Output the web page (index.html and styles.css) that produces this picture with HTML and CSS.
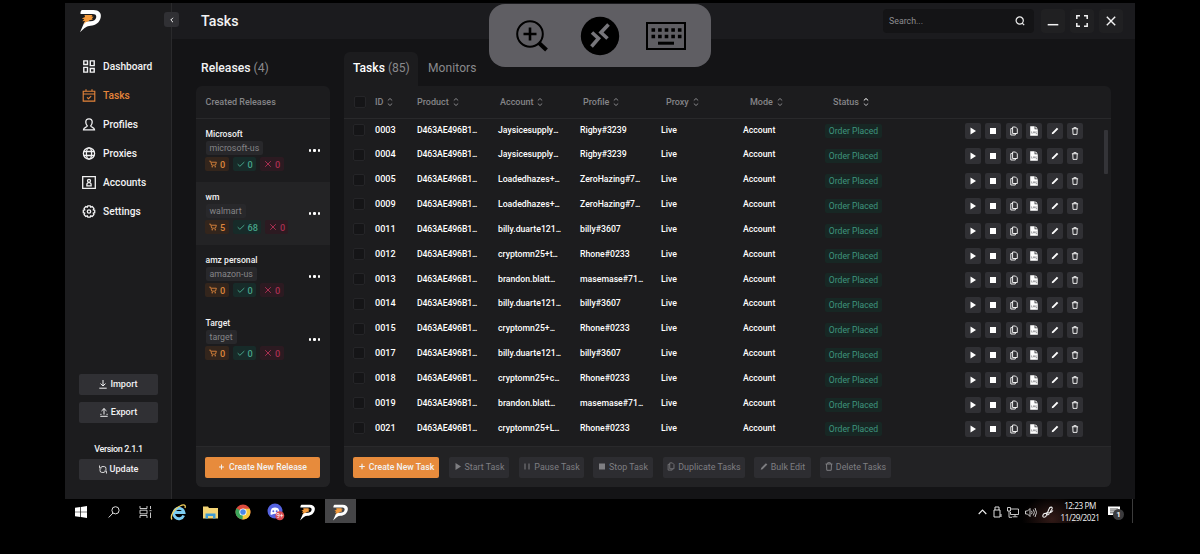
FILE: index.html
```html
<!DOCTYPE html>
<html lang="en">
<head>
<meta charset="utf-8">
<title>Tasks</title>
<link rel="stylesheet" href="styles.css">
</head>
<body>
<svg class="sprite" aria-hidden="true">
  <symbol id="logo" viewBox="0 0 22 24"><path d="M1 5C.8 2.500 1.800 1 2.600 1H14c5.500 0 8.200 3.200 7.200 7.500-1 4.800-4.800 8-10.200 8.200-3.800.1-6 2.300-10.500 6.500L4.300 14.500c.5-1.500 1.700-2.200 3.200-2.200h3.500c3.300 0 5.200-1.300 5.700-3.700C17.200 6.100 15.800 5 12.800 5z" fill="#fff"/><path d="M5 6h8l-1 1.500 2.200.3-1.700 1.500.8 1.200-3.300.8-1.500 1.200-2 .5-2.500 2.300L5.500 12l-2.700.2 2-2-2.500-.8L5.500 8z" fill="#f39a3c"/></symbol>
  <symbol id="grid" viewBox="0 0 12 12"><path d="M1.200.800h3.400v3.400H1.200zM7.200.800h3.600v4.400H7.200zM1.200 6.800h3.400v4.400H1.200zM7.200 7.800h3.600v3.400H7.200z" fill="none" stroke="currentColor" stroke-width="1.300"/></symbol>
  <symbol id="calendar" viewBox="0 0 13 13"><path d="M.7 2.200h11.600v9.900H.7zM.7 5h11.600M3.500.300v2.500M9.500.300v2.500M4.500 8.300l1.500 1.400 2.700-2.600" fill="none" stroke="currentColor" stroke-width="1.100"/></symbol>
  <symbol id="person" viewBox="0 0 13 13"><path d="M4.800 8C3.500 6.700 3.300 5.200 3.300 4c0-2 1.300-3.200 3.200-3.200S9.700 2 9.700 4c0 1.200-.2 2.700-1.500 4 .2 1.300 3.800.900 3.800 3.800H1C1 8.900 4.600 9.300 4.800 8z" fill="none" stroke="currentColor" stroke-width="1.300"/></symbol>
  <symbol id="globe" viewBox="0 0 13 13"><g fill="none" stroke="currentColor" stroke-width="1.300"><circle cx="6.500" cy="6.500" r="5.600"/><ellipse cx="6.500" cy="6.500" rx="2.600" ry="5.600"/><path d="M1.300 4.500h10.400M1.300 8.500h10.400"/></g></symbol>
  <symbol id="account" viewBox="0 0 14 13"><g fill="none" stroke="currentColor" stroke-width="1.300"><path d="M.7.700h12.600v11.600H.7z"/><circle cx="7" cy="4.800" r="1.500"/><path d="M4.900 9.800V8.500c0-2.600 4.200-2.600 4.200 0v1.300z"/></g></symbol>
  <symbol id="gear" viewBox="0 0 13 13"><g fill="none" stroke="currentColor" stroke-width="1.300"><path d="M5.300.800h2.400l.5 1.400 1.500-.6 1.700 1.700-.6 1.500 1.400.5v2.400l-1.400.5.600 1.500-1.700 1.700-1.500-.6-.5 1.400H5.300l-.5-1.400-1.500.6-1.700-1.700.6-1.500-1.400-.5V5.300l1.400-.5-.6-1.500 1.700-1.700 1.500.6z"/><circle cx="6.500" cy="6.500" r="1.700"/></g></symbol>
  <symbol id="import" viewBox="0 0 8 9"><path d="M4 0v6M1.500 3.600L4 6l2.500-2.400M.3 8.200h7.400" fill="none" stroke="currentColor"/></symbol>
  <symbol id="export" viewBox="0 0 8 9"><path d="M4 6.500v-6M1.500 3L4 .600 6.500 3M1.500 6.300H.3M6.500 6.300h1.200M.3 8.300h7.400" fill="none" stroke="currentColor"/></symbol>
  <symbol id="refresh" viewBox="0 0 9 9"><path d="M2.800 1.200h3a2 2 0 0 1 2 2v2.600M.6 0v2.600h2.600M6.200 7.800h-3a2 2 0 0 1-2-2V3.200M8.400 9V6.400H5.800" fill="none" stroke="currentColor"/></symbol>
  <symbol id="cart" viewBox="0 0 9 8"><path d="M.3.800h1.500l1.300 4.500h4.200l1-3.300H2.500" fill="none" stroke="currentColor"/><circle cx="3.600" cy="7" r=".8" fill="currentColor"/><circle cx="7" cy="7" r=".8" fill="currentColor"/></symbol>
  <symbol id="check" viewBox="0 0 8 8"><path d="M.7 4.200l2.200 2.100 4.400-4.200" fill="none" stroke="currentColor"/></symbol>
  <symbol id="cross" viewBox="0 0 8 8"><path d="M1.200 1.200l5.600 5.600M6.800 1.200L1.200 6.800" fill="none" stroke="currentColor"/></symbol>
  <symbol id="plus" viewBox="0 0 8 8"><path d="M4 1.200v5.600M1.200 4h5.600" fill="none" stroke="currentColor" stroke-width="1.200"/></symbol>
  <symbol id="sort" viewBox="0 0 6 10"><path d="M.8 3.500L3 1.500l2.200 2" fill="none" stroke="var(--up, currentColor)"/><path d="M.8 6.500L3 8.500l2.200-2" fill="none" stroke="currentColor"/></symbol>
  <symbol id="play" viewBox="0 0 8 8"><path d="M1.500.500l5.500 3.500-5.500 3.500z" fill="currentColor"/></symbol>
  <symbol id="pause" viewBox="0 0 8 8"><path d="M2 1v6M6 1v6" stroke="currentColor"/></symbol>
  <symbol id="stop" viewBox="0 0 8 8"><path d="M1 1h6v6H1z" fill="currentColor"/></symbol>
  <symbol id="copy" viewBox="0 0 8 10"><path d="M2.600 1h2.900l1.800 1.800v4.700H2.600zM2.600 2.600H.8V9h4.500V7.500" fill="none" stroke="currentColor" stroke-width=".9"/></symbol>
  <symbol id="log" viewBox="0 0 8 10"><path d="M.2.300h4.400v3h3.200v6.400H.2zM5.400.300l2.400 2.300H5.400z" fill="currentColor"/><path d="M1.600 5.300v1.900h1.100M3.500 5.700h1V7h-1zM6.600 5.700h-.9V7h.9v.9h-.9" fill="none" stroke="#66666a" stroke-width=".5"/></symbol>
  <symbol id="pencil" viewBox="0 0 8 8"><path d="M.7 7.300l.5-1.900L5.900.700l1.400 1.400-4.700 4.700z" fill="currentColor"/></symbol>
  <symbol id="trash" viewBox="0 0 8 9"><path d="M.5 2h7M2.700 2V.700h2.600V2M1.500 2l.3 6.300h4.400L6.500 2" fill="none" stroke="currentColor"/></symbol>
</svg>

<div class="app">
  <aside class="sidebar">
    <svg class="brand"><use href="#logo"/></svg>
    <button class="collapse"><svg viewBox="0 0 6 6"><path d="M4 .800L1.800 3 4 5.200" fill="none" stroke="currentColor"/></svg></button>
    <nav class="nav">
      <a><svg><use href="#grid"/></svg>Dashboard</a>
      <a class="active"><svg><use href="#calendar"/></svg>Tasks</a>
      <a><svg><use href="#person"/></svg>Profiles</a>
      <a><svg><use href="#globe"/></svg>Proxies</a>
      <a><svg><use href="#account"/></svg>Accounts</a>
      <a><svg><use href="#gear"/></svg>Settings</a>
    </nav>
    <div class="side-actions">
      <button class="side-btn"><svg><use href="#import"/></svg>Import</button>
      <button class="side-btn"><svg><use href="#export"/></svg>Export</button>
      <span class="version">Version 2.1.1</span>
      <button class="side-btn"><svg><use href="#refresh"/></svg>Update</button>
    </div>
  </aside>

  <main class="main">
    <header class="topbar">
      <h1>Tasks</h1>
      <div class="search"><span>Search...</span><svg viewBox="0 0 10 10"><g fill="none" stroke="currentColor" stroke-width="1.200"><circle cx="4.700" cy="4.500" r="3.600"/><path d="M7.200 7.100l2 2"/></g></svg></div>
      <div class="window-btns">
        <button><svg viewBox="0 0 12 12"><path d="M.7 9.700h10.600" stroke="currentColor" stroke-width="1.500"/></svg></button>
        <button><svg viewBox="0 0 12 12"><path d="M.8 4V.800H4M8 .800h3.200V4M11.200 8v3.200H8M4 11.200H.8V8" fill="none" stroke="currentColor" stroke-width="1.500"/></svg></button>
        <button><svg viewBox="0 0 12 12"><path d="M1.800 1.800l8.400 8.400M10.200 1.800l-8.400 8.400" stroke="currentColor" stroke-width="1.400"/></svg></button>
      </div>
    </header>

    <div class="content">
      <section class="releases">
        <h2>Releases <span>(4)</span></h2>
        <div class="panel">
          <div class="panel-head">Created Releases</div>
          <div class="release-list" id="releases"></div>
          <div class="panel-foot"><button class="primary"><svg><use href="#plus"/></svg>Create New Release</button></div>
        </div>
      </section>

      <section class="tasks">
        <div class="tabs">
          <div class="tab selected">Tasks <span>(85)</span></div>
          <div class="tab">Monitors</div>
        </div>
        <div class="panel flat">
          <div class="table-head">
            <i class="box"></i>
            <span>ID<svg><use href="#sort"/></svg></span>
            <span>Product<svg><use href="#sort"/></svg></span>
            <span>Account<svg><use href="#sort"/></svg></span>
            <span>Profile<svg><use href="#sort"/></svg></span>
            <span>Proxy<svg><use href="#sort"/></svg></span>
            <span>Mode<svg><use href="#sort"/></svg></span>
            <span class="sorted">Status<svg><use href="#sort"/></svg></span>
          </div>
          <div class="table-body">
            <div class="rows" id="rows"></div>
            <div class="scroll"><div class="thumb"></div></div>
          </div>
          <div class="panel-foot toolbar">
            <button class="primary"><svg><use href="#plus"/></svg>Create New Task</button>
            <button class="w-start"><svg><use href="#play"/></svg>Start Task</button>
            <button class="w-pause"><svg><use href="#pause"/></svg>Pause Task</button>
            <button class="w-stop"><svg><use href="#stop"/></svg>Stop Task</button>
            <button class="w-dup"><svg><use href="#copy"/></svg>Duplicate Tasks</button>
            <button class="w-edit"><svg><use href="#pencil"/></svg>Bulk Edit</button>
            <button class="w-del"><svg><use href="#trash"/></svg>Delete Tasks</button>
          </div>
        </div>
      </section>
    </div>
  </main>
</div>

<div class="remote-bar">
  <svg class="r-zoom" viewBox="0 0 32 32"><g fill="none" stroke="#000"><circle cx="14" cy="14" r="12.800" stroke-width="2"/><path d="M14 7.500v13M7.500 14h13" stroke-width="2.600"/><path d="M23 23l7.500 7" stroke-width="4"/></g></svg>
  <svg class="r-rdp" viewBox="0 0 40 40"><circle cx="20" cy="20" r="19.200" fill="#000"/><g fill="none" stroke="#77767b" stroke-width="3.600"><path d="M12 16.500l6.500 6-7 8"/><path d="M28.500 8.500L21 16.500l6.500 6"/></g></svg>
  <svg class="r-keys" viewBox="0 0 40 28"><path d="M1 1h38v26H1z" fill="none" stroke="#000" stroke-width="2"/><path d="M5.500 8h30M5.500 14.500h30" stroke="#000" stroke-width="3.600" stroke-dasharray="3.600 3"/><path d="M12 21.200h16" stroke="#000" stroke-width="3"/></svg>
</div>

<footer class="taskbar">
  <div class="task-icons">
    <span><svg width="12" height="12" viewBox="0 0 12 12"><path d="M0 1.700L5.300 1v4.700H0zM6 .900L12 0v5.700H6zM0 6.300h5.300V11L0 10.300zM6 6.300h6V12l-6-.9z" fill="#fff"/></svg></span>
    <span><svg width="12" height="12" viewBox="0 0 12 12"><g fill="none" stroke="#ddd"><circle cx="7.500" cy="4.300" r="3.600"/><path d="M5 7L.700 11.500"/></g></svg></span>
    <span><svg width="13" height="12" viewBox="0 0 13 12"><path d="M1 0v2.500h7V0M1 12V9.500h7V12M1 4.200h7v3.600H1zM11.500 0v3M11.500 6.500V12M10.500 4.700h2" fill="none" stroke="#ddd" stroke-width=".9"/></svg></span>
    <span><svg width="17" height="17" viewBox="0 0 17 17"><path d="M13.700 11.500A5.200 5.200 0 1 1 14 8.500H5" fill="none" stroke="#7ccdf2" stroke-width="2.800"/><path d="M2 15.500C-.5 12 5 4 10 2c4-2 6-1 5 2" fill="none" stroke="#f0cd5a" stroke-width="1.300"/></svg></span>
    <span><svg width="15" height="13" viewBox="0 0 15 13"><path d="M0 .500h5l1 1.500h9v10.500H0z" fill="#f3d475"/><path d="M2.500 7.500h10v5h-2.500V10H5v2.500H2.500z" fill="#3f9bd4"/></svg></span>
    <span><svg width="16" height="16" viewBox="0 0 16 16"><circle cx="8" cy="8" r="7.500" fill="#dc4b3e"/><path d="M8 8L1.500 4.200A7.500 7.500 0 0 0 7.500 15.500L11 10z" fill="#3ba55a"/><path d="M8 8V4.800h6.700A7.500 7.500 0 0 1 7.500 15.500z" fill="#f5c93b"/><circle cx="8" cy="8" r="3.600" fill="#fff"/><circle cx="8" cy="8" r="2.800" fill="#4a87e8"/></svg></span>
    <span><svg width="18" height="18" viewBox="0 0 18 18"><circle cx="8" cy="8" r="7.500" fill="#5563e0"/><path d="M3.500 11.500c0-3 .5-5 1.500-6.300 2-.9 4-.9 6 0 1 1.300 1.500 3.300 1.500 6.300-2 .7-2-.7-4.500-.7s-2.500 1.400-4.500.7z" fill="#fff"/><circle cx="6.300" cy="8.200" r="1" fill="#5563e0"/><circle cx="9.700" cy="8.200" r="1" fill="#5563e0"/><circle cx="12.800" cy="12.800" r="4.500" fill="#d84a50"/><text x="12.800" y="15.200" text-anchor="middle" font-size="6.500" fill="#fff">9+</text></svg></span>
    <span><svg width="17" height="17"><use href="#logo"/></svg></span>
    <span class="open"><svg width="17" height="17"><use href="#logo"/></svg></span>
  </div>
  <div class="tray">
    <svg width="9" height="6" viewBox="0 0 9 6"><path d="M.7 5l3.800-4 3.800 4" fill="none" stroke="#eee" stroke-width="1.100"/></svg>
    <svg width="9" height="12" viewBox="0 0 9 12"><path d="M2 4V1h4v3M1 4h6v7H1zM8 8v3" fill="none" stroke="#ddd"/></svg>
    <svg width="12" height="11" viewBox="0 0 12 11"><path d="M4 2h7.500v5.500h-8V5M.5.500h3V4h-3zM2 4v6.300h3M8 7.500v2M5.500 9.800h5" fill="none" stroke="#ddd" stroke-width=".9"/></svg>
    <svg width="12" height="11" viewBox="0 0 12 11"><path d="M.5 4h2l2.500-2.500v8L2.500 7h-2zM6.500 3.800q1.200 1.700 0 3.400M8.300 2.500q2.200 3 0 6M10 1q3 4.500 0 9" fill="none" stroke="#ddd" stroke-width=".9"/></svg>
    <svg width="12" height="12" viewBox="0 0 12 12"><path d="M1 9c-1 3 3 3 3.500 0L7 3c1-3 4-2 3 0L7 8C5.500 10 3.500 8 5 6.500M1 9c.5-2 3-2 5-2s4-1 5-2.500" fill="none" stroke="#eee" stroke-width="1.100"/></svg>
    <div class="clock"><span>12:23 PM</span><span>11/29/2021</span></div>
    <div class="notice"><svg width="12" height="12" viewBox="0 0 12 12"><path d="M0 .500h12v8.500H8L6 11.500 6 9H0z" fill="#fff"/><path d="M2 3h8M2 4.900h8M2 6.800h6" stroke="#111" stroke-width=".7"/></svg><b>1</b></div>
  </div>
</footer>
<script src="app.js"></script>
</body>
</html>
```

FILE: styles.css
```css
* { box-sizing: border-box; }
body {
  margin: 0; width: 1200px; height: 554px; overflow: hidden;
  padding: 3px 65px 0; background: #000; color: #f2f2f3;
  font-family: Roboto, "Liberation Sans", sans-serif; font-size: 9px;
}
h1, h2 { margin: 0; font-weight: 500; }
button {
  border: 0; padding: 0; margin: 0; font: inherit; color: inherit;
  display: flex; align-items: center; justify-content: center;
}
svg { flex: none; display: block; }
.sprite { position: absolute; width: 0; height: 0; }

.app { display: flex; height: 496px; background: #141416; }

.sidebar {
  position: relative; width: 107px; display: flex; flex-direction: column;
  background: #1c1c1e; border-right: 1px solid #2a2a2c;
}
.brand { width: 23px; height: 24px; margin: 6px 0 0 14px; }
.collapse {
  position: absolute; left: 99px; top: 9px; width: 15px; height: 15px;
  background: #303034; border-radius: 3px; z-index: 1;
}
.collapse svg { width: 6px; height: 6px; }
.nav { margin: 18.500px 0 0 17px; display: flex; flex-direction: column; }
.nav a {
  height: 29px; display: flex; align-items: center; gap: 7px;
  font-size: 10.200px; font-weight: 500;
}
.nav svg { width: 14px; height: 13px; }
.nav .active { color: #e5843a; }
.side-actions {
  margin: auto 13px 19.500px 14px; display: flex; flex-direction: column; gap: 7px;
}
.side-btn {
  height: 21px; gap: 3px; background: #303034; border-radius: 2px;
  font-size: 9.100px; font-weight: 500;
}
.side-btn svg { width: 8px; height: 9px; }
.version { margin: 13px 0 -3px; line-height: 12px; text-align: center; font-size: 9px; font-weight: 500; letter-spacing: -.35px; }

.main { flex: 1; display: flex; flex-direction: column; }
.topbar {
  height: 36px; display: flex; align-items: center; padding: 0 12px 0 29px;
  background: #1b1b1e;
}
.topbar h1 { font-size: 14.200px; letter-spacing: .05px; }
.search {
  margin-left: auto; width: 151px; height: 24px; border-radius: 4px;
  padding: 0 9px 0 6px; display: flex; align-items: center; justify-content: space-between;
  background: #141416; color: #8c8c8f; font-size: 8.800px;
}
.search svg { width: 10px; height: 10px; color: #eee; }
.window-btns { display: flex; gap: 5px; margin-left: 7px; }
.window-btns button { width: 24px; height: 24px; border-radius: 4px; background: #202022; }
.window-btns svg { width: 12px; height: 12px; }

.content { flex: 1; display: flex; gap: 14px; padding: 13px 24px 12px 24px; }
.releases { width: 134px; display: flex; flex-direction: column; }
.releases h2 { height: 34px; line-height: 32px; padding-left: 5px; font-size: 12.200px; }
h2 span, .tab span { color: #8a8a8d; font-weight: 400; }
.panel {
  flex: 1; display: flex; flex-direction: column; overflow: hidden;
  background: #1c1c1e; border-radius: 6px;
}
.panel.flat { border-top-left-radius: 0; }
.panel-head {
  height: 33px; line-height: 32px; padding-left: 9.500px; color: #858588;
  font-weight: 500; border-bottom: 1px solid #29292b;
}
.release-list { flex: 1; }
.release {
  height: 63px; padding: 9px 11px 0 9.500px; display: flex; justify-content: space-between;
}
.release.current { background: #232325; }
.release-info { display: flex; flex-direction: column; align-items: flex-start; }
.release-name { line-height: 13px; font-size: 8.600px; font-weight: 500; }
.store {
  height: 14px; line-height: 14px; padding: 0 4px; border-radius: 2px;
  background: #28282b; color: #858588; font-size: 8.800px;
}
.badges { display: flex; gap: 4px; margin-top: 2px; margin-left: -.5px; }
.badge {
  height: 14px; min-width: 23.500px; padding: 0 3px 0 4px; border-radius: 2px;
  display: flex; align-items: center; gap: 3px; font-size: 9.200px; font-weight: 500;
}
.badge svg { width: 8px; height: 8px; }
.cart { background: #33251c; color: #df873d; }
.ok { background: #172b29; color: #46a389; }
.bad { background: #2c1a21; color: #a82f50; }
.dots { display: flex; gap: 2px; margin-top: 21px; margin-right: -1px; }
.dots i { width: 2.500px; height: 2.500px; border-radius: 1px; background: #fff; }
.panel-foot {
  height: 41px; padding: 0 9px; display: flex; align-items: center;
  background: #222224; border-top: 1px solid #29292b;
}
.primary { background: #e78b3c; border-radius: 2px; height: 21px; font-weight: 500; gap: 4px; }
.primary svg { width: 7px; height: 8px; }
.panel-foot button { padding-bottom: 1px; }
.releases .primary { width: 115px; font-size: 8.700px; }

.tasks { flex: 1; display: flex; flex-direction: column; }
.tabs { height: 34px; display: flex; }
.tab { padding-left: 10px; line-height: 32px; font-size: 12px; color: #8a8a8d; letter-spacing: .1px; }
.tab.selected {
  width: 74px; padding-left: 9px; background: #1c1c1e; color: #fff; font-weight: 500;
  border-radius: 6px 6px 0 0; font-size: 12.100px; letter-spacing: 0;
}
.table-head {
  height: 33px; padding-left: 10px; border-bottom: 1px solid #29292b;
  display: grid; grid-template-columns: 21px 42px 83px 83px 83px 84px 83px 1fr;
  align-items: center; color: #858588; font-size: 9px; font-weight: 500;
}
.table-head span { display: flex; align-items: center; gap: 4px; }
.table-head svg { width: 6px; height: 10px; }
.sorted { --up: #fff; }
.sorted svg { color: #b5b5b8; }
.box { width: 12px; height: 12px; background: #151517; border: 1px solid #252528; border-radius: 2px; }
.table-body { flex: 1; display: flex; justify-content: space-between; }
.row {
  height: 24.830px; padding-left: 9px; display: grid; align-items: center;
  grid-template-columns: 22px 42px 81px 82px 81px 82px 82px 140px auto;
  font-size: 8.700px; font-weight: 500; color: #fff;
}
.row > span { padding-bottom: 3.500px; }
.row .id { font-size: 9.100px; }
.row .product { letter-spacing: -.12px; }
.row .more { letter-spacing: -.9px; }
.row .box { margin-bottom: 3px; }
.row > .status {
  width: 57px; height: 14px; padding: 0; line-height: 14px; text-align: center;
  background: #172724; color: #3f957e; font-weight: 400; border-radius: 2px; font-size: 8.600px;
}
.actions { display: flex; gap: 4.400px; }
.actions button { width: 16px; height: 16px; background: #303034; border-radius: 2px; }
.actions svg { width: 8px; height: 8px; }
.actions .tall svg { height: 10px; width: 8px; }
.scroll { width: 4px; margin-right: 3px; padding-top: 11px; }
.thumb { height: 44px; background: #343438; border-radius: 1px; }
.toolbar button { height: 21px; border-radius: 2px; }
.toolbar button:not(.primary) { background: #2d2d31; color: #7e7e82; gap: 3px; font-size: 8.900px; }
.toolbar svg { width: 8px; height: 9px; }
.toolbar .primary { width: 86px; gap: 3px; margin-right: 10px; font-size: 8.700px; }
.toolbar .w-start { width: 60px; margin-right: 10px; }
.toolbar .w-pause { width: 65px; margin-right: 9px; }
.toolbar .w-stop { width: 60px; margin-right: 10px; }
.toolbar .w-dup { width: 82px; margin-right: 9px; }
.toolbar .w-edit { width: 57px; margin-right: 9px; }
.toolbar .w-del { width: 71px; }

.remote-bar {
  position: absolute; left: 489px; top: 4px; width: 222px; height: 63px;
  border-radius: 16px; background: #5f5e63;
  display: flex; align-items: center; padding-left: 27px;
}
.r-zoom { width: 32px; height: 32px; }
.r-rdp { width: 40px; height: 40px; margin-left: 32px; }
.r-keys { width: 40px; height: 28px; margin-left: 26px; }

.taskbar {
  height: 24px; display: flex; justify-content: space-between;
  background: radial-gradient(ellipse 30px 24px at 987px 20px, #321a17, transparent);
}
.task-icons { display: flex; }
.task-icons span { width: 32.400px; height: 24px; display: flex; align-items: center; justify-content: center; padding-top: 2px; }
.task-icons span.open { width: 31px; margin-left: 1px; background: #454547; }
.tray { display: flex; align-items: center; padding: 2px 10px 0 0; margin-right: 2px; border-right: 1px solid #3c3c3c; gap: 6px; }
.tray > svg { margin-left: -.5px; }
.clock {
  width: 40px; display: flex; flex-direction: column; align-items: center; white-space: nowrap;
  font: 8.200px/12px "Open Sans", sans-serif; letter-spacing: -.45px;
}
.notice { position: relative; width: 14px; margin-left: 2px; }
.notice b {
  position: absolute; left: 5px; top: 3px; width: 11px; height: 11px; border-radius: 50%;
  background: #3b3b3d; font-size: 8px; line-height: 11px; text-align: center;
}
```

FILE: app.js
```js
const icon = (name) => `<svg><use href="#${name}"/></svg>`;
const tighten = (text) => text.replace("...", '<span class="more">...</span>');

const releases = [
  ["Microsoft", "microsoft-us", 0, 0, 0],
  ["wm", "walmart", 5, 68, 0],
  ["amz personal", "amazon-us", 0, 0, 0],
  ["Target", "target", 0, 0, 0],
];
document.getElementById("releases").innerHTML = releases.map(([name, store, cart, ok, bad], i) => `
  <div class="release${i === 1 ? " current" : ""}">
    <div class="release-info">
      <span class="release-name">${name}</span>
      <span class="store">${store}</span>
      <div class="badges">
        <span class="badge cart">${icon("cart")}${cart}</span>
        <span class="badge ok">${icon("check")}${ok}</span>
        <span class="badge bad">${icon("cross")}${bad}</span>
      </div>
    </div>
    <div class="dots"><i></i><i></i><i></i></div>
  </div>`).join("");

const tasks = [
  ["0003", "Jaysicesupply...", "Rigby#3239"],
  ["0004", "Jaysicesupply...", "Rigby#3239"],
  ["0005", "Loadedhazes+...", "ZeroHazing#7..."],
  ["0009", "Loadedhazes+...", "ZeroHazing#7..."],
  ["0011", "billy.duarte121...", "billy#3607"],
  ["0012", "cryptomn25+t...", "Rhone#0233"],
  ["0013", "brandon.blatt...", "masemase#71..."],
  ["0014", "billy.duarte121...", "billy#3607"],
  ["0015", "cryptomn25+...", "Rhone#0233"],
  ["0017", "billy.duarte121...", "billy#3607"],
  ["0018", "cryptomn25+c...", "Rhone#0233"],
  ["0019", "brandon.blatt...", "masemase#71..."],
  ["0021", "cryptomn25+L...", "Rhone#0233"],
];
document.getElementById("rows").innerHTML = tasks.map(([id, account, profile]) => `
  <div class="row">
    <i class="box"></i>
    <span class="id">${id}</span>
    <span class="product">${tighten("D463AE496B1...")}</span>
    <span>${tighten(account)}</span>
    <span>${tighten(profile)}</span>
    <span>Live</span>
    <span>Account</span>
    <span class="status">Order Placed</span>
    <div class="actions">
      <button>${icon("play")}</button>
      <button>${icon("stop")}</button>
      <button class="tall">${icon("copy")}</button>
      <button class="tall">${icon("log")}</button>
      <button>${icon("pencil")}</button>
      <button>${icon("trash")}</button>
    </div>
  </div>`).join("");
```
